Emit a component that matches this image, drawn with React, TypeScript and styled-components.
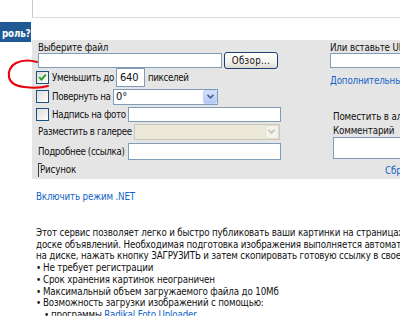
import styled, { createGlobalStyle } from "styled-components";

const GlobalStyle = createGlobalStyle`
  html, body {
    margin: 0;
    padding: 0;
    background: #ffffff;
    overflow: hidden;
  }
  body {
    font-family: "DejaVu Sans Condensed", "DejaVu Sans", "Liberation Sans", sans-serif;
    font-stretch: condensed;
    font-size: 9.7px;
    letter-spacing: -0.15px;
    color: #111;
  }
`;

const Page = styled.div`
  width: 640px;
  height: 316px;
  position: relative;
`;

const TopBar = styled.div`
  display: flex;
  height: 18px;
`;

const TopStub = styled.div`
  width: 32px;
`;

const TopFrame = styled.div`
  flex: 1;
  border-left: 1px solid #c9c9c9;
  border-bottom: 1px solid #dedbd2;
`;

const Body = styled.div`
  display: flex;
  align-items: flex-start;
`;

const SideCol = styled.div`
  width: 32px;
  flex: none;
`;

const SideTab = styled.div`
  margin-top: 4px;
  width: 31px;
  height: 20px;
  background: #1f5a94;
  color: #fff;
  font-weight: bold;
  white-space: nowrap;
  overflow: hidden;
  display: flex;
  align-items: flex-end;
  padding: 0 0 2px 2px;
  line-height: 12px;
  box-sizing: border-box;
`;

const MainCol = styled.div`
  flex: 1;
  padding-top: 22px;
`;

const Panel = styled.div`
  width: 560px;
  background: #e5e5e5;
  display: grid;
  grid-template-columns: 292px 1fr;
  padding: 2px 0 2px 6px;
`;

const Column = styled.div`
  display: flex;
  flex-direction: column;
`;

const Row = styled.div<{ $h: number; $mt?: number; $pl?: number }>`
  display: flex;
  align-items: center;
  height: ${({ $h }) => $h}px;
  margin-top: ${({ $mt }) => $mt ?? 0}px;
  padding-left: ${({ $pl }) => $pl ?? 0}px;
  white-space: nowrap;
`;

const Label = styled.span<{ $w?: number; $ml?: number }>`
  display: inline-block;
  min-width: ${({ $w }) => ($w ? `${$w - 2}px` : "0")};
  margin-left: ${({ $ml }) => $ml ?? 0}px;
  padding-right: 2px;
  letter-spacing: -0.35px;
  flex: none;
`;

const TextInput = styled.div<{ $w: number; $h: number }>`
  width: ${({ $w }) => $w}px;
  height: ${({ $h }) => $h}px;
  box-sizing: border-box;
  background: #fff;
  border: 1px solid #7f9db9;
  display: flex;
  align-items: center;
  padding-left: 3px;
  font-size: 11px;
  flex: none;
`;

const BrowseButton = styled.div`
  margin-left: 2px;
  width: 54px;
  height: 17px;
  box-sizing: border-box;
  border: 1px solid #1d3f6e;
  border-radius: 3px;
  background: linear-gradient(#ffffff, #f4f3ee 60%, #dcd9cf);
  display: flex;
  align-items: center;
  justify-content: center;
  letter-spacing: 0.3px;
`;

const Box = styled.span`
  width: 13px;
  height: 13px;
  box-sizing: border-box;
  margin-left: -2px;
  margin-right: 3px;
  border: 1px solid #1c5180;
  background: linear-gradient(135deg, #dcdcd7, #ffffff);
  display: inline-flex;
  align-items: center;
  justify-content: center;
  flex: none;
`;

const Select = styled.div<{ $w: number; $disabled?: boolean }>`
  width: ${({ $w }) => $w}px;
  height: 16px;
  box-sizing: border-box;
  border: 1px solid ${({ $disabled }) => ($disabled ? "#cbc7b8" : "#7f9db9")};
  background: ${({ $disabled }) => ($disabled ? "#ece9d8" : "#fff")};
  display: flex;
  align-items: center;
  justify-content: space-between;
  padding-left: 2px;
  font-size: 11px;
  flex: none;
`;

const SelectArrow = styled.span<{ $disabled?: boolean }>`
  width: 14px;
  height: 14px;
  box-sizing: border-box;
  border: 1px solid ${({ $disabled }) => ($disabled ? "#e1ded3" : "#c3d3fd")};
  background: ${({ $disabled }) =>
    $disabled ? "#f2f1ec" : "linear-gradient(#d6e2fd, #b3c8f5)"};
  border-radius: 2px;
  display: flex;
  align-items: center;
  justify-content: center;
`;

const Legend = styled.span`
  position: relative;
  padding-left: 1px;
  border-left: 1px solid #3c3c3c;
  line-height: 14px;
  &::before {
    content: "";
    position: absolute;
    left: 0;
    top: 0;
    width: 3px;
    border-top: 1px solid #3c3c3c;
  }
`;

const Link = styled.span`
  color: #1464c8;
`;

const TextArea = styled.div`
  width: 200px;
  height: 22px;
  box-sizing: border-box;
  background: #fff;
  border: 1px solid #7f9db9;
`;

const Below = styled.div`
  padding-left: 4px;
`;

const NetRow = styled.div`
  margin-top: 11px;
  height: 13px;
  display: flex;
  align-items: center;
  color: #1464c8;
`;

const Text = styled.div`
  margin-top: 24px;
  line-height: 11.7px;
  white-space: nowrap;
`;

const Bullet = styled.div<{ $indent?: number }>`
  padding-left: ${({ $indent }) => $indent ?? 0}px;
  &::before {
    content: "•";
    display: inline-block;
    width: 7px;
  }
`;

const Scribble = styled.svg`
  position: absolute;
  left: 0;
  top: 55px;
  pointer-events: none;
`;

const Chevron = ({ color }: { color: string }) => (
  <svg width="7" height="5" viewBox="0 0 7 5">
    <path d="M0.5 0.8 L3.5 3.8 L6.5 0.8" fill="none" stroke={color} strokeWidth="1.6" />
  </svg>
);

const Checkbox = ({ checked }: { checked?: boolean }) => (
  <Box>
    {checked && (
      <svg width="9" height="9" viewBox="0 0 9 9">
        <path d="M1.2 4.2 L3.4 6.6 L7.8 1.6" fill="none" stroke="#21a121" strokeWidth="1.8" />
      </svg>
    )}
  </Box>
);

export default function App() {
  return (
    <Page>
      <GlobalStyle />
      <TopBar>
        <TopStub />
        <TopFrame />
      </TopBar>
      <Body>
        <SideCol>
          <SideTab>роль?</SideTab>
        </SideCol>
        <MainCol>
          <Panel>
            <Column>
              <Row $h={10}>Выберите файл</Row>
              <Row $h={16}>
                <TextInput $w={184} $h={15} />
                <BrowseButton>Обзор...</BrowseButton>
              </Row>
              <Row $h={18}>
                <Checkbox checked />
                <Label $w={63}>Уменьшить до</Label>
                <TextInput $w={29} $h={19}>640</TextInput>
                <Label $ml={3}>пикселей</Label>
              </Row>
              <Row $h={17} $mt={2}>
                <Checkbox />
                <Label $w={61}>Повернуть на</Label>
                <Select $w={105}>
                  0°
                  <SelectArrow>
                    <Chevron color="#4d6185" />
                  </SelectArrow>
                </Select>
              </Row>
              <Row $h={16} $mt={1}>
                <Checkbox />
                <Label $w={75}>Надпись на фото</Label>
                <TextInput $w={153} $h={15} />
              </Row>
              <Row $h={17} $mt={1}>
                <Label $w={95}>Разместить в галерее</Label>
                <Select $w={146} $disabled>
                  <span />
                  <SelectArrow $disabled>
                    <Chevron color="#c4c2b8" />
                  </SelectArrow>
                </Select>
              </Row>
              <Row $h={18} $mt={2}>
                <Label $w={90}>Подробнее (ссылка)</Label>
                <TextInput $w={153} $h={17} />
              </Row>
              <Row $h={15} $mt={2}>
                <Legend>Рисунок</Legend>
              </Row>
            </Column>
            <Column>
              <Row $h={10}>Или вставьте URL</Row>
              <Row $h={15} $mt={1}>
                <TextInput $w={220} $h={15} />
              </Row>
              <Row $h={12} $mt={6}>
                <Link>Дополнительные параметры</Link>
              </Row>
              <Row $h={12} $mt={24} $pl={3}>
                Поместить в альбом
              </Row>
              <Row $h={11} $mt={3} $pl={3}>
                Комментарий
              </Row>
              <Row $h={22} $mt={1} $pl={3}>
                <TextArea />
              </Row>
              <Row $h={12} $mt={5} $pl={55}>
                <Link>Сбросить</Link>
              </Row>
            </Column>
          </Panel>
          <Below>
            <NetRow>Включить режим .NET</NetRow>
            <Text>
              <div>Этот сервис позволяет легко и быстро публиковать ваши картинки на страницах форумов, блогов и</div>
              <div>доске объявлений. Необходимая подготовка изображения выполняется автоматически, достаточно выбрать файл</div>
              <div>на диске, нажать кнопку ЗАГРУЗИТЬ и затем скопировать готовую ссылку в свое сообщение.</div>
              <Bullet>Не требует регистрации</Bullet>
              <Bullet>Срок хранения картинок неограничен</Bullet>
              <Bullet>Максимальный объем загружаемого файла до 10Мб</Bullet>
              <Bullet>Возможность загрузки изображений с помощью:</Bullet>
              <Bullet $indent={8}>
                программы <Link>Radikal Foto Uploader</Link>
              </Bullet>
            </Text>
          </Below>
        </MainCol>
      </Body>
      <Scribble width="60" height="40" viewBox="0 55 60 40">
        <path
          d="M37 62 C30 60 22 60 16 63 C10 66 8 72 9 77 C10 83 16 86 24 87 C32 88 41 88 48 86"
          fill="none"
          stroke="#e8000b"
          strokeWidth="2"
          strokeLinecap="round"
        />
      </Scribble>
    </Page>
  );
}
